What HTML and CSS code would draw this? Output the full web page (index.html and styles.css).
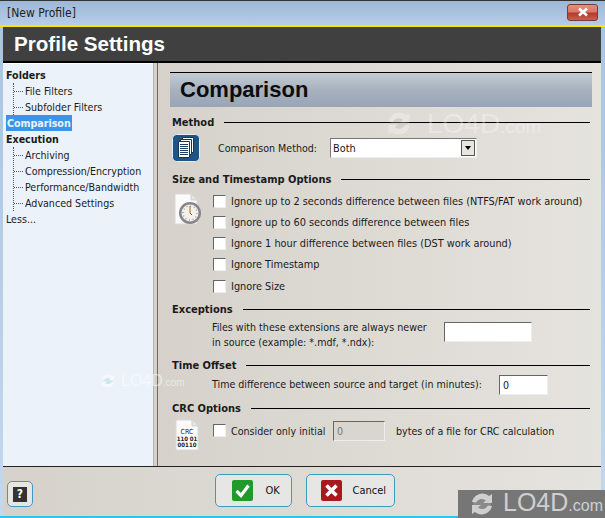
FILE: index.html
```html
<!DOCTYPE html>
<html lang="en">
<head>
  <meta charset="UTF-8" />
  <title>[New Profile]</title>
  <link rel="stylesheet" href="styles.css">
</head>
<body>
  <div class="window">
    <div class="titlebar">
      <span class="title-text">[New Profile]</span>
      <div class="close-btn">
        <svg width="14" height="10" viewBox="0 0 14 10"><path d="M3 1.5 L11 8.5 M11 1.5 L3 8.5" stroke="#fff" stroke-width="2.6" fill="none"/></svg>
      </div>
    </div>
    <div class="banner">Profile Settings</div>

    <div class="main">
      <nav class="nav">
        <div class="nav-head">Folders</div>
        <div class="tree">
          <div class="tree-item">File Filters</div>
          <div class="tree-item">Subfolder Filters</div>
        </div>
        <div class="nav-head"><span class="nav-selected">Comparison</span></div>
        <div class="nav-head">Execution</div>
        <div class="tree">
          <div class="tree-item">Archiving</div>
          <div class="tree-item">Compression/Encryption</div>
          <div class="tree-item">Performance/Bandwidth</div>
          <div class="tree-item">Advanced Settings</div>
        </div>
        <div class="nav-less">Less...</div>
      </nav>
      <div class="splitter"></div>

      <section class="content">
        <h1 class="page-title">Comparison</h1>

        <div class="group-head group-method"><span>Method</span><i></i></div>
        <div class="method-row">
          <div class="method-icon">
            <svg width="28" height="28" viewBox="0 0 28 28">
              <rect x="0.5" y="0.5" width="27" height="27" rx="4" fill="#1f5585" stroke="#e8eef4"/>
              <path d="M10.500 3.500h11v15h-11z" fill="#fff" stroke="#10375a"/>
              <path d="M8.500 5.500h11v15h-11z" fill="#fff" stroke="#10375a"/>
              <path d="M6.500 7.500h11v16h-11z" fill="#fff" stroke="#10375a"/>
              <path d="M8 10.500h8M8 12.500h8M8 14.500h8M8 16.500h8M8 18.500h8M8 20.500h8" stroke="#1f3f66" stroke-width="1"/>
            </svg>
          </div>
          <label class="method-label">Comparison Method:</label>
          <div class="select">
            <span class="select-value">Both</span>
            <span class="select-arrow"></span>
          </div>
        </div>

        <div class="group-head group-size"><span>Size and Timestamp Options</span><i></i></div>
        <div class="size-row">
          <svg class="clock-icon" width="30" height="33" viewBox="0 0 30 33">
            <path d="M1 1h16l6 6v24H1z" fill="#fbfbfb" stroke="#d8d8d8"/>
            <path d="M17 1v6h6" fill="#e4e4e4" stroke="#cfcfcf"/>
            <circle cx="16" cy="20" r="11" fill="#85868c"/>
            <circle cx="16" cy="20" r="8.500" fill="#f3f1ea"/>
            <circle cx="16" cy="20" r="7" fill="none" stroke="#999" stroke-width="1.400" stroke-dasharray="1 2.660"/>
            <path d="M16 13v7" stroke="#a06a30" stroke-width="1"/>
            <path d="M16 20l2 2" stroke="#555" stroke-width="1"/>
          </svg>
          <div class="checks">
            <div class="check-row"><span class="checkbox"></span>Ignore up to 2 seconds difference between files (NTFS/FAT work around)</div>
            <div class="check-row"><span class="checkbox"></span>Ignore up to 60 seconds difference between files</div>
            <div class="check-row"><span class="checkbox"></span>Ignore 1 hour difference between files (DST work around)</div>
            <div class="check-row"><span class="checkbox"></span>Ignore Timestamp</div>
            <div class="check-row"><span class="checkbox"></span>Ignore Size</div>
          </div>
        </div>

        <div class="group-head group-exc"><span>Exceptions</span><i></i></div>
        <div class="exc-row">
          <p>Files with these extensions are always newer<br>in source (example: *.mdf, *.ndx):</p>
          <div class="textbox exc-box"></div>
        </div>

        <div class="group-head group-time"><span>Time Offset</span><i></i></div>
        <div class="time-row">
          <span>Time difference between source and target (in minutes):</span>
          <div class="textbox time-box">0</div>
        </div>

        <div class="group-head group-crc"><span>CRC Options</span><i></i></div>
        <div class="crc-row">
          <svg class="crc-icon" width="24" height="32" viewBox="0 0 24 32">
            <path d="M1 1h16l6 6v24H1z" fill="#fbfbfb" stroke="#d8d8d8"/>
            <path d="M17 1v6h6" fill="#e4e4e4" stroke="#cfcfcf"/>
            <text x="12" y="15" class="crc-mark">CRC</text>
            <text x="12" y="22" class="crc-bits">110 01</text>
            <text x="12" y="28" class="crc-bits">00110</text>
          </svg>
          <span class="checkbox crc-check"></span>
          <span class="crc-label">Consider only initial</span>
          <div class="textbox crc-box">0</div>
          <span class="crc-text">bytes of a file for CRC calculation</span>
        </div>
      </section>
    </div>

    <footer class="footer">
      <button class="btn btn-help">
        <span class="help-icon">?</span>
      </button>
      <div class="footer-buttons">
        <button class="btn btn-ok">
          <svg width="21" height="21" viewBox="0 0 21 21">
            <rect width="21" height="21" rx="2" fill="#1f9a2b"/>
            <path d="M4.500 11 L9 15.500 L16.500 5.500" stroke="#fff" stroke-width="3.200" fill="none"/>
          </svg>
          <span>OK</span>
        </button>
        <button class="btn btn-cancel">
          <svg width="21" height="21" viewBox="0 0 21 21">
            <rect width="21" height="21" rx="2" fill="#a81a1e"/>
            <path d="M5.500 5.500 L15.500 15.500 M15.500 5.500 L5.500 15.500" stroke="#fff" stroke-width="3.600" fill="none"/>
          </svg>
          <span>Cancel</span>
        </button>
      </div>
    </footer>

    <div class="wm wm-content">
      <svg width="38" height="31" viewBox="0 0 36 26">
        <circle cx="18" cy="13" r="8" fill="#bdbab4"/>
        <path d="M8 11a10.500 10.500 0 0 1 17-6l3-2v9h-9l3-2.500a6.500 6.500 0 0 0-10 2z" fill="#fff"/>
        <path d="M28 15a10.500 10.500 0 0 1-17 6l-3 2v-9h9l-3 2.500a6.500 6.500 0 0 0 10-2z" fill="#fff"/>
      </svg>
      <span>LO4D<small>.com</small></span>
    </div>
    <div class="wm wm-nav">
      <svg width="22" height="18" viewBox="0 0 36 26">
        <circle cx="18" cy="13" r="8" fill="#b5d8ee"/>
        <path d="M8 11a10.500 10.500 0 0 1 17-6l3-2v9h-9l3-2.500a6.500 6.500 0 0 0-10 2z" fill="#fff"/>
        <path d="M28 15a10.500 10.500 0 0 1-17 6l-3 2v-9h9l-3 2.500a6.500 6.500 0 0 0 10-2z" fill="#fff"/>
      </svg>
      <span>LO4D<small>.com</small></span>
    </div>
    <div class="wm-corner">
      <svg width="36" height="26" viewBox="0 0 36 26">
        <circle cx="18" cy="13" r="9" fill="#8a8a8a"/>
        <path d="M8 11a10.500 10.500 0 0 1 17-6l3-2v9h-9l3-2.500a6.500 6.500 0 0 0-10 2z" fill="#cfcfcf"/>
        <path d="M28 15a10.500 10.500 0 0 1-17 6l-3 2v-9h9l-3 2.500a6.500 6.500 0 0 0 10-2z" fill="#cfcfcf"/>
      </svg>
      <span>LO4D<small>.com</small></span>
    </div>
  </div>
</body>
</html>
```

FILE: styles.css
```css
* {
  margin: 0;
  padding: 0;
  box-sizing: border-box;
}

html, body {
  width: 605px;
  height: 518px;
  overflow: hidden;
}

body {
  font-family: "DejaVu Sans Condensed", "DejaVu Sans", sans-serif;
  font-stretch: condensed;
  font-size: 10.850px;
  color: #1a1a1a;
}

.window {
  position: relative;
  width: 605px;
  height: 518px;
  display: flex;
  flex-direction: column;
  padding: 0 4px 0 3px;
  background: linear-gradient(#a9c3df, #c3d8ec);
  border-bottom: 2px solid #2ec4ea;
  border-top: 1px solid #333;
}

.titlebar {
  height: 26px;
  flex: none;
  display: flex;
  justify-content: space-between;
  align-items: center;
  background: linear-gradient(#9db8d6, #b6cde6);
  margin: 0 -4px 0 -3px;
  padding: 0 7px 0 7px;
  border-bottom: 2px solid #ffe600;
}

.title-text {
  font-size: 12px;
  color: #222;
}

.close-btn {
  width: 31px;
  height: 17px;
  margin-top: -2px;
  border: 1px solid #7a3a3a;
  border-radius: 3px;
  background: linear-gradient(#e08f80 0, #d9796a 45%, #b53a2a 55%, #c9604e 100%);
  display: flex;
  align-items: center;
  justify-content: center;
}

.banner {
  height: 36px;
  flex: none;
  background: #404040;
  border-bottom: 2px solid #000;
  color: #fff;
  font-family: "Liberation Sans", Arial, sans-serif;
  font-size: 20.600px;
  font-weight: bold;
  line-height: 34px;
  padding-left: 11px;
}

.main {
  flex: 1;
  display: flex;
  min-height: 0;
}

.nav {
  width: 150px;
  flex: none;
  background: #ebf2fa;
  padding: 3px 0 0 3px;
  border-top: 1px solid #fff;
  font-size: 10.600px;
}

.nav-head {
  height: 16px;
  line-height: 16px;
  font-weight: bold;
}

.nav-selected {
  display: inline-block;
  background: #3c94e8;
  color: #e9f4ff;
  padding: 0 1px;
}

.tree {
  margin-left: 7px;
  border-left: 1px dotted #555;
}

.tree-item {
  height: 16px;
  line-height: 16px;
  padding-left: 11px;
  position: relative;
}

.tree-item::before {
  content: "";
  position: absolute;
  left: 0;
  top: 8px;
  width: 9px;
  border-top: 1px dotted #555;
}

.nav-less {
  height: 16px;
  line-height: 16px;
}

.splitter {
  width: 5px;
  flex: none;
  background: #d5d1ca;
  border-left: 1px solid #b9b6ae;
  border-right: 1px solid #6e6b66;
}

.content {
  flex: 1;
  min-width: 0;
  background: linear-gradient(90deg, #d6d2cb, #e5e3de);
  padding: 9px 9px 0 12px;
}

.page-title {
  height: 35px;
  border-top: 1px solid #000;
  background: linear-gradient(#c3cbd4, #a7b2bf 50%, #98a5b6);
  font-family: "Liberation Sans", Arial, sans-serif;
  font-size: 22px;
  line-height: 33px;
  padding-left: 10px;
  color: #0c0c0c;
}

.group-head {
  display: flex;
  align-items: center;
  gap: 10px;
  height: 16px;
  margin-right: 2px;
  font-size: 11px;
  font-weight: bold;
}

.group-head i {
  flex: 1;
  border-top: 1px solid #000;
}

.group-head span {
  margin-left: 2px;
}

.group-method { margin-top: 7px; }
.group-size { margin-top: 9px; }
.group-exc { margin-top: 8px; }
.group-time { margin-top: 8px; }
.group-crc { margin-top: 6px; }

.method-row {
  display: flex;
  align-items: center;
  margin-top: 4px;
  height: 28px;
  padding-left: 2px;
}

.method-icon {
  width: 28px;
  height: 28px;
  display: flex;
}

.method-label {
  margin-left: 18px;
  width: 112px;
  font-size: 10.600px;
}

.select {
  width: 147px;
  height: 20px;
  background: #fff;
  border: 1px solid #777;
  border-right-color: #eee;
  border-bottom-color: #eee;
  display: flex;
  align-items: center;
  justify-content: space-between;
  padding: 0 1px 0 2px;
}

.select-arrow {
  width: 14px;
  height: 16px;
  background: #e8e6e0;
  border: 1px solid #555;
  position: relative;
}

.select-arrow::after {
  content: "";
  position: absolute;
  left: 3px;
  top: 5px;
  border: 3.500px solid transparent;
  border-top: 4px solid #000;
  border-bottom: 0;
}

.size-row {
  display: flex;
  margin-top: 6px;
  padding-left: 4px;
}

.clock-icon {
  flex: none;
}

.checks {
  margin-left: 9px;
  display: flex;
  flex-direction: column;
  gap: 7.250px;
}

.check-row {
  display: flex;
  align-items: center;
  height: 14px;
  white-space: nowrap;
}

.check-row:first-child {
  margin-top: 1px;
}

.checkbox {
  width: 13px;
  height: 13px;
  flex: none;
  margin-right: 5px;
  background: #fff;
  border: 1px solid #666;
  border-right-color: #eee;
  border-bottom-color: #eee;
}

.exc-row {
  display: flex;
  margin-top: 1px;
  padding-left: 42px;
  height: 31px;
  font-size: 10.600px;
}

.exc-row p {
  width: 232px;
  line-height: 15px;
  margin-top: 2px;
}

.textbox {
  height: 20px;
  background: #fff;
  border: 1px solid #666;
  border-right-color: #eee;
  border-bottom-color: #eee;
  line-height: 18px;
  padding-left: 3px;
}

.exc-box {
  width: 88px;
  margin-top: 4px;
}

.time-row {
  display: flex;
  align-items: center;
  margin-top: 1px;
  padding-left: 42px;
  height: 20px;
  font-size: 10.600px;
}

.time-row span {
  width: 287px;
}

.time-box {
  width: 49px;
  margin-top: 1px;
}

.crc-row {
  display: flex;
  align-items: flex-start;
  margin-top: 3px;
  padding-left: 5px;
  height: 32px;
  font-size: 10.600px;
}

.crc-icon {
  flex: none;
  margin-right: 14px;
}

.crc-mark {
  font-size: 7px;
  text-anchor: middle;
  fill: #222;
}

.crc-bits {
  font-size: 6px;
  font-weight: bold;
  text-anchor: middle;
  fill: #222;
}

.crc-check {
  margin-top: 5px;
}

.crc-label {
  width: 102px;
  line-height: 20px;
  margin-top: 2px;
}

.crc-box {
  width: 52px;
  margin-right: 11px;
  margin-top: 2px;
  background: #d9d6cf;
  color: #777;
}

.crc-text {
  line-height: 20px;
  margin-top: 2px;
}

.footer {
  height: 50px;
  flex: none;
  position: relative;
  display: flex;
  justify-content: center;
  align-items: flex-start;
  background: linear-gradient(90deg, #d6d2cb, #e5e3de);
  border-top: 1px solid #222;
  padding-top: 7px;
}

.footer-buttons {
  display: flex;
  gap: 14px;
  margin-left: 5px;
}

.btn {
  height: 33px;
  font-family: inherit;
  font-stretch: inherit;
  font-size: 11px;
  color: #111;
  background: #e6e6e4;
  border: 1px solid #3d9ac6;
  border-radius: 5px;
  display: flex;
  align-items: center;
}

.btn-ok {
  width: 77px;
  padding-left: 16px;
  gap: 13px;
}

.btn-cancel {
  width: 89px;
  padding-left: 14px;
  gap: 11px;
}

.btn-help {
  position: absolute;
  left: 4px;
  top: 14px;
  width: 26px;
  height: 26px;
  justify-content: center;
}

.help-icon {
  width: 14px;
  height: 15px;
  background: #333;
  color: #fff;
  font-weight: bold;
  font-size: 12px;
  line-height: 15px;
  text-align: center;
}

.wm {
  position: absolute;
  display: flex;
  align-items: center;
  font-family: "Liberation Sans", Arial, sans-serif;
  color: #fff;
  line-height: 1;
}

.wm svg,
.wm-corner svg {
  flex: none;
}

.wm-content {
  left: 380px;
  top: 107px;
  gap: 9px;
  font-size: 28px;
  opacity: 0.3;
}

.wm-content small {
  font-size: 19px;
}

.wm-nav {
  left: 97px;
  top: 371px;
  gap: 2px;
  font-size: 16px;
  opacity: 0.5;
}

.wm-nav small {
  font-size: 10px;
}

.wm-corner {
  position: absolute;
  right: 0;
  bottom: -2px;
  width: 147px;
  height: 28px;
  background: #767676;
  display: flex;
  align-items: center;
  gap: 3px;
  padding-left: 6px;
  font-family: "Liberation Sans", Arial, sans-serif;
  color: #cfcfcf;
  font-size: 25px;
  line-height: 28px;
}

.wm-corner small {
  font-size: 16px;
}
```
